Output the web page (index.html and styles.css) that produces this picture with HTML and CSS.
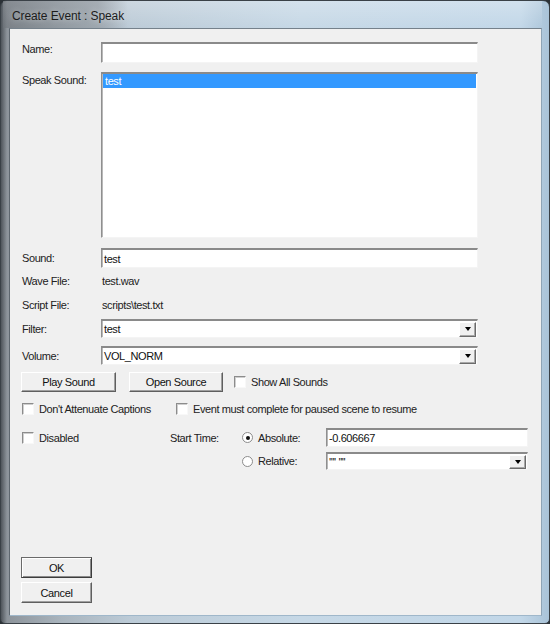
FILE: index.html
```html
<!DOCTYPE html>
<html>
<head>
<meta charset="utf-8">
<link rel="stylesheet" href="styles.css">
</head>
<body>
<div class="window">
  <div class="titlebar"><span class="title">Create Event : Speak</span></div>
  <div class="client">
    <div class="row r-name">
      <div class="label">Name:</div>
      <div class="field edit"></div>
    </div>
    <div class="row r-list">
      <div class="label">Speak Sound:</div>
      <div class="field listbox"><div class="sel">test</div></div>
    </div>
    <div class="row r-sound">
      <div class="label">Sound:</div>
      <div class="field edit"><span class="txt">test</span></div>
    </div>
    <div class="row r-wave">
      <div class="label">Wave File:</div>
      <div class="static">test.wav</div>
    </div>
    <div class="row r-script">
      <div class="label">Script File:</div>
      <div class="static">scripts\test.txt</div>
    </div>
    <div class="row r-filter">
      <div class="label">Filter:</div>
      <div class="field combo"><span class="txt">test</span><span class="ddbtn"><span class="tri"></span></span></div>
    </div>
    <div class="row r-volume">
      <div class="label">Volume:</div>
      <div class="field combo"><span class="txt">VOL_NORM</span><span class="ddbtn"><span class="tri"></span></span></div>
    </div>
    <div class="row r-buttons">
      <div class="btn b-play">Play Sound</div>
      <div class="btn b-open">Open Source</div>
      <label class="check c-show"><span class="cb"></span><span>Show All Sounds</span></label>
    </div>
    <div class="r-checks">
      <label class="check c-atten"><span class="cb"></span><span>Don't Attenuate Captions</span></label>
      <label class="check c-event"><span class="cb"></span><span>Event must complete for paused scene to resume</span></label>
    </div>
    <div class="timegrid">
      <label class="check c-dis"><span class="cb"></span><span>Disabled</span></label>
      <div class="st-label">Start Time:</div>
      <label class="radio rad-abs"><span class="rb on"></span><span>Absolute:</span></label>
      <div class="edit t-abs"><span class="txt">-0.606667</span></div>
      <label class="radio rad-rel"><span class="rb"></span><span>Relative:</span></label>
      <div class="combo t-rel"><span class="txt">'''' ''''</span><span class="ddbtn"><span class="tri"></span></span></div>
    </div>
    <div class="btn b-ok">OK</div>
    <div class="btn b-cancel">Cancel</div>
  </div>
</div>
</body>
</html>
```

FILE: styles.css
```css
html, body {
  margin: 0;
  padding: 0;
}
body {
  width: 550px;
  height: 624px;
  background: #2b3136;
  overflow: hidden;
  font-family: "Liberation Sans", Arial, sans-serif;
  font-size: 11px;
  letter-spacing: -0.4px;
  color: #1a1a1a;
}
.window {
  box-sizing: border-box;
  width: 550px;
  height: 624px;
  border: 1px solid #3a4147;
  border-radius: 7px 7px 5px 5px;
  padding: 0 7px 7px 8px;
  display: flex;
  flex-direction: column;
  background: linear-gradient(90deg, #4f555b 0px, #8d949b 6px, #a9b4bd 60px, #bccbd7 130px, #c6d8e6 300px, #c2d7e8 520px, #a9c3d8 548px);
}
.titlebar {
  height: 27px;
  display: flex;
  align-items: center;
  margin-left: -6px;
  padding-left: 6px;
  background: linear-gradient(90deg, rgba(110,116,122,0.6) 0px, rgba(140,146,152,0.55) 95px, rgba(190,204,215,0) 125px),
              linear-gradient(180deg, rgba(255,255,255,0.25), rgba(255,255,255,0));
}
.title {
  font-family: "Liberation Sans", Arial, sans-serif;
  font-size: 12px;
  letter-spacing: -0.1px;
  color: #1c1c1c;
  padding-left: 3px;
  padding-top: 2px;
  text-shadow: 0 0 6px rgba(255,255,255,0.6);
}
.client {
  flex: 1;
  background: #f0f0f0;
  border: 1px solid;
  border-color: #75818b #8ea4b6 #9fb7ca #5e676f;
  display: flex;
  flex-direction: column;
  padding-left: 12px;
}
.row {
  display: flex;
  align-items: flex-start;
}
.label {
  width: 79px;
  flex: none;
  color: #222;
}
.field {
  width: 377px;
  box-sizing: border-box;
}
.edit, .listbox, .combo {
  box-sizing: border-box;
  background: #fff;
  border-style: solid;
  border-width: 2px 1px 1px 1px;
  border-color: #8a8a8a #f4f4f4 #f4f4f4 #8f8f8f;
  box-shadow: inset 1px 0 0 #b8b8b8;
  display: flex;
  align-items: center;
}
.txt {
  padding-left: 2px;
  color: #111;
  white-space: pre;
}
.static {
  padding-left: 1px;
  color: #222;
}

.r-name { margin-top: 13px; height: 21px; }
.r-name .label { padding-top: 1px; }
.r-name .edit { height: 21px; }

.r-list { margin-top: 9px; height: 166px; }
.r-list .label { padding-top: 2px; }
.listbox { height: 166px; align-items: flex-start; padding: 0 1px 0 1px; }
.sel {
  width: 100%;
  height: 14px;
  line-height: 14px;
  background: #3399ff;
  color: #fff;
  padding-left: 2px;
  box-sizing: border-box;
}

.r-sound { margin-top: 10px; height: 20px; align-items: center; }
.r-sound .edit { height: 20px; }

.r-wave { margin-top: 4px; height: 18px; align-items: center; }
.r-script { margin-top: 6px; height: 18px; align-items: center; }

.r-filter { margin-top: 5px; height: 19px; align-items: center; }
.r-volume { margin-top: 8px; height: 19px; align-items: center; }
.combo { height: 19px; justify-content: space-between; padding-right: 1px; }

.ddbtn {
  box-sizing: border-box;
  width: 17px;
  height: 15px;
  background: #f0f0f0;
  border: 1px solid;
  border-color: #fff #6b6b6b #6b6b6b #fff;
  box-shadow: inset -1px -1px 0 #a8a8a8;
  display: flex;
  align-items: center;
  justify-content: center;
}
.tri {
  width: 0;
  height: 0;
  border-left: 3.5px solid transparent;
  border-right: 3.5px solid transparent;
  border-top: 4px solid #000;
}

.btn {
  box-sizing: border-box;
  height: 20px;
  background: #f0f0f0;
  border: 1px solid;
  border-color: #ffffff #5f5f5f #5f5f5f #ffffff;
  box-shadow: inset -1px -1px 0 #a0a0a0;
  display: flex;
  align-items: center;
  justify-content: center;
  color: #111;
}
.r-buttons { margin-top: 7px; height: 20px; margin-left: -1px; align-items: center; }
.b-play { width: 95px; }
.b-open { width: 94px; margin-left: 13px; }
.c-show { margin-left: 11px; }

.check, .radio {
  display: flex;
  align-items: center;
  color: #222;
  white-space: nowrap;
}
.cb {
  box-sizing: border-box;
  width: 12px;
  height: 12px;
  background: #fff;
  border: 1px solid;
  border-color: #8c8c8c #f8f8f8 #f8f8f8 #8c8c8c;
  box-shadow: inset 1px 1px 0 #cfcfcf;
  margin-right: 5px;
  flex: none;
}
.r-checks {
  margin-top: 8px;
  height: 18px;
  display: grid;
  grid-template-columns: 154px auto;
  align-items: center;
}

.timegrid {
  margin-top: 10px;
  display: grid;
  grid-template-columns: 148px 72px 84px 202px;
  grid-template-rows: 19px 18px;
  row-gap: 5px;
  align-items: center;
}
.c-dis { grid-column: 1; grid-row: 1; }
.st-label { grid-column: 2; grid-row: 1; color: #222; }
.rad-abs { grid-column: 3; grid-row: 1; }
.t-abs { grid-column: 4; grid-row: 1; height: 19px; }
.rad-rel { grid-column: 3; grid-row: 2; }
.t-rel { grid-column: 4; grid-row: 2; height: 18px; }
.t-rel .ddbtn { height: 14px; }

.rb {
  box-sizing: border-box;
  width: 11px;
  height: 11px;
  border-radius: 50%;
  background: #fff;
  border: 1px solid #8c8c8c;
  margin-right: 5px;
  display: flex;
  align-items: center;
  justify-content: center;
}
.rb.on::after {
  content: "";
  width: 4px;
  height: 4px;
  border-radius: 50%;
  background: #111;
}

.b-ok {
  margin-top: 87px;
  width: 71px;
  height: 21px;
  margin-left: -1px;
  border-color: #6a6a6a #3c3c3c #3c3c3c #6a6a6a;
  box-shadow: inset 1px 1px 0 #fff, inset -1px -1px 0 #8a8a8a;
}
.b-cancel {
  margin-top: 4px;
  width: 71px;
  height: 21px;
  margin-left: -1px;
}
```
